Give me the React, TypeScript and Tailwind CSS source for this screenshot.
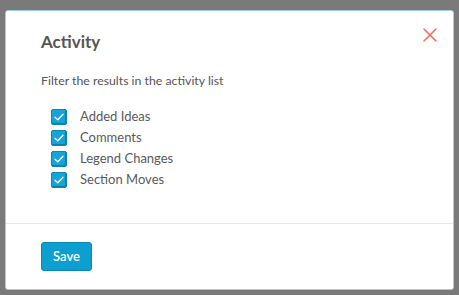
import { X } from "lucide-react";

const items = ["Added Ideas", "Comments", "Legend Changes", "Section Moves"];

function Check() {
    return (
        <span className="flex h-4 w-4 flex-none items-center justify-center rounded-[2px] border border-[#0f86b3] bg-[#16a3d8] shadow-[inset_-1px_-1px_0_#0d7ea8]">
            <svg width="10" height="8" viewBox="0 0 10 8" fill="none">
                <path d="M1 4.2L3.8 6.8L9 1.2" stroke="white" strokeWidth="1.3" strokeLinecap="round" strokeLinejoin="round" />
            </svg>
        </span>
    );
}

export default function App() {
    return (
        <div className="h-[295px] w-[459px] bg-[#7a7a7a] pt-[10px] pl-[5px] pr-[5px] pb-[6px] font-['Lato',sans-serif]">
            <div className="flex h-[280px] w-[449px] flex-col rounded-[3px] border border-[#9fd0de] bg-white">
                <div className="flex items-start justify-between pl-[35px] pr-[11px] pt-[19px]">
                    <h2 className="text-[17px] font-bold leading-[24px] text-[#555]">Activity</h2>
                    <X className="-mt-[7px] h-6 w-6 text-[#f26a4a]" strokeWidth={1.5} />
                </div>
                <p className="mt-[19px] pl-[35px] text-[12.3px] leading-[16px] text-[#555]">Filter the results in the activity list</p>
                <div className="mt-[20px] flex flex-col gap-[5px] pl-[45px]">
                    {items.map((t) => (
                        <label key={t} className="flex h-4 items-center gap-[13px] text-[13px] text-[#5a5a5a]">
                            <Check />
                            {t}
                        </label>
                    ))}
                </div>
                <div className="mt-[35px] border-t border-[#e6e6e6] pl-[35px] pt-[18px]">
                    <button className="h-[29px] w-[51px] rounded-[3px] border border-[#0b87b3] bg-[#0c9fcf] text-[13px] font-semibold text-white">
                        Save
                    </button>
                </div>
            </div>
        </div>
    );
}
